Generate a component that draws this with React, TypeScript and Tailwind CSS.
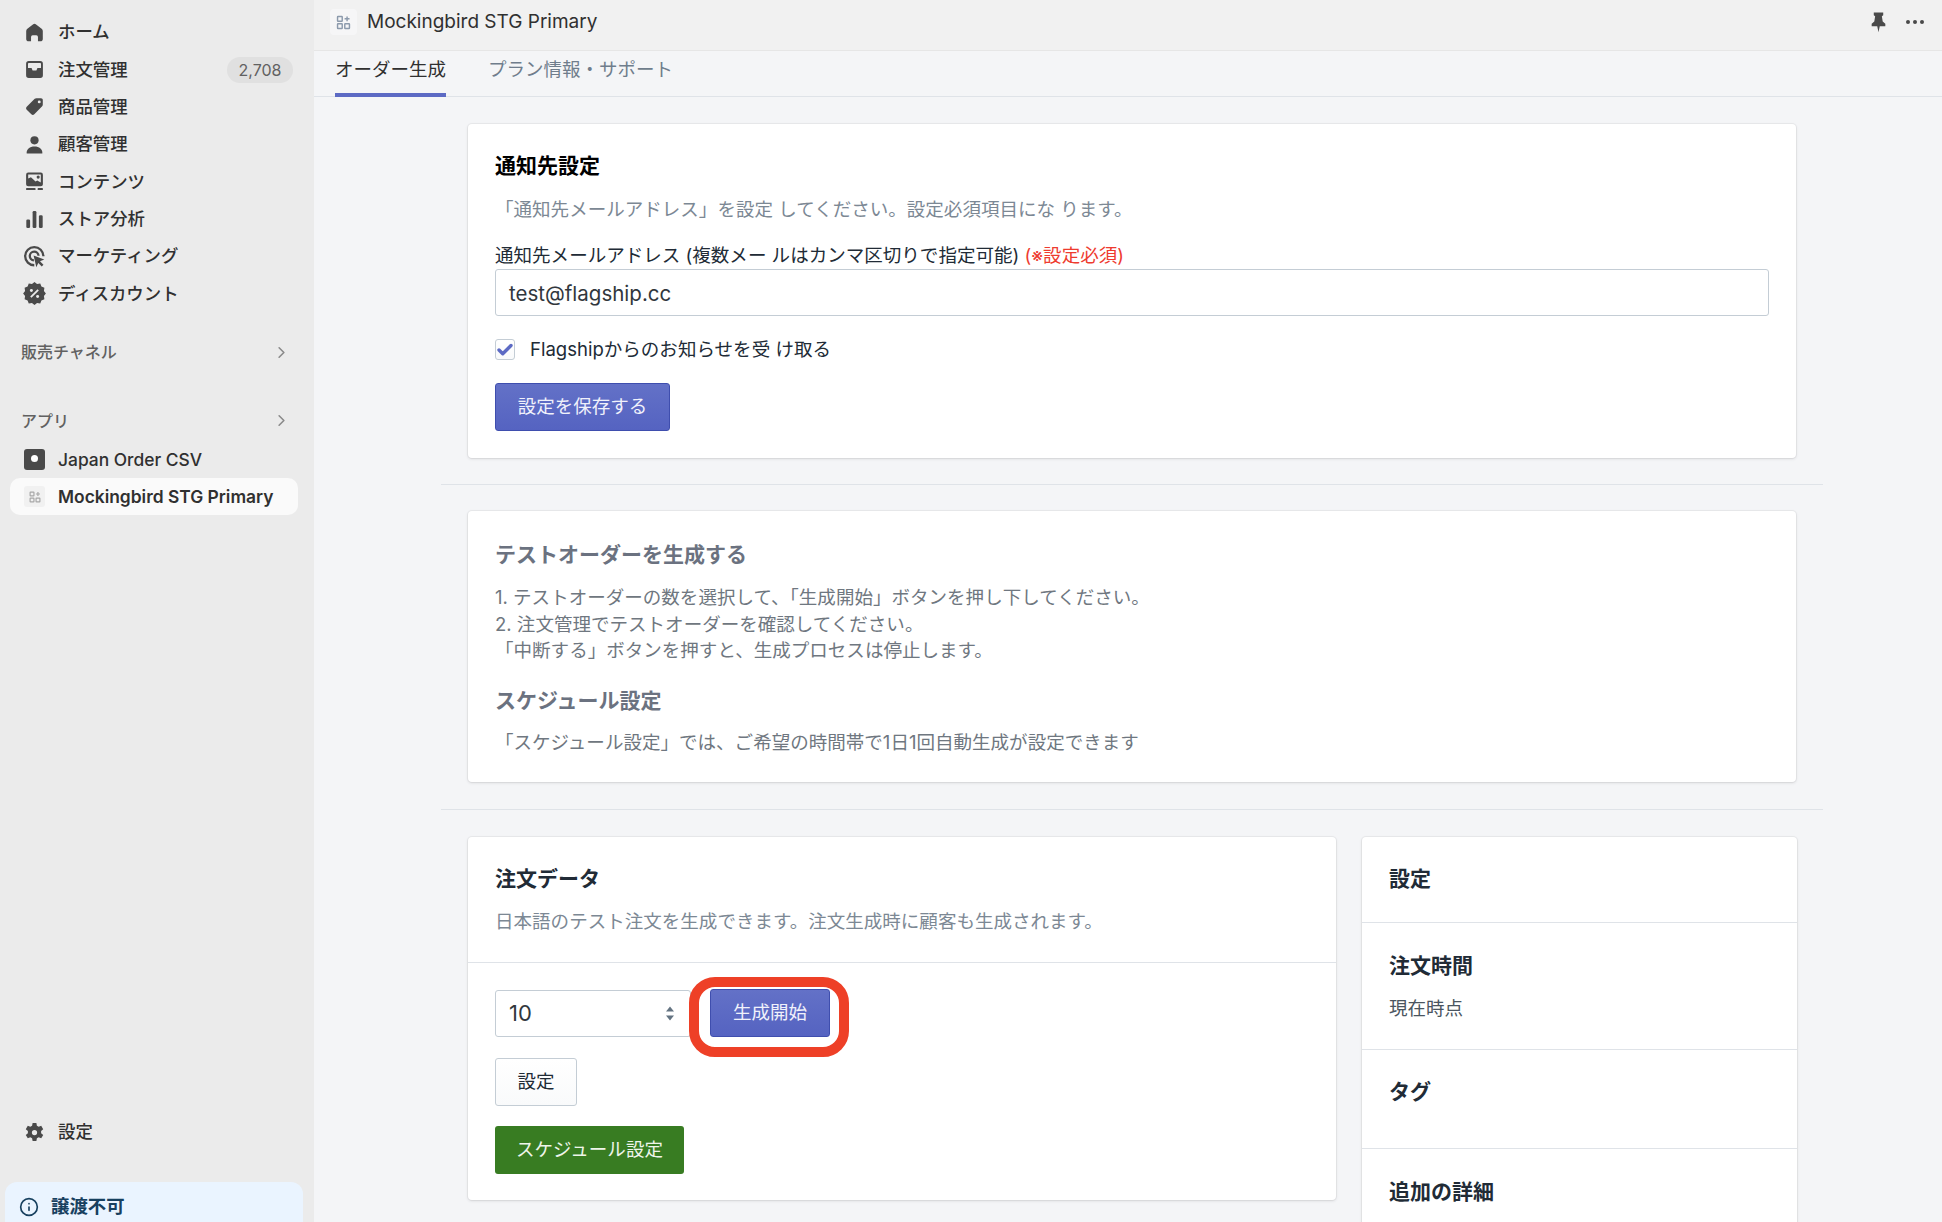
import React from 'react';
import { ChevronRight, Info, Check } from 'lucide-react';

const HomeIcon = () => (
  <svg viewBox="0 0 20 20" className="w-[21px] h-[21px]" fill="#4a4a4a">
    <path d="M8.800 2.100a2 2 0 0 1 2.400 0l5.600 4.400c.7.5 1.100 1.200 1.100 2.100v7.600c0 1.200-1 2.200-2.200 2.200h-2.400v-4.200a1.600 1.600 0 0 0-1.600-1.600H8.300a1.600 1.600 0 0 0-1.600 1.600v4.200H4.300c-1.200 0-2.200-1-2.200-2.200V8.600c0-.9.4-1.600 1.100-2.100z" />
  </svg>
);

const InboxIcon = () => (
  <svg viewBox="0 0 20 20" className="w-[21px] h-[21px]" fill="#4a4a4a">
    <path fillRule="evenodd" d="M4.500 2h11A2.500 2.500 0 0 1 18 4.500v11a2.500 2.500 0 0 1-2.500 2.500h-11A2.500 2.500 0 0 1 2 15.500v-11A2.500 2.500 0 0 1 4.500 2zM4.600 3.800a.8.8 0 0 0-.8.8V8.500h3.400l1 2.500h3.600l1-2.500h3.400V4.600a.8.8 0 0 0-.8-.8z" />
  </svg>
);

const TagIcon = () => (
  <svg viewBox="0 0 20 20" className="w-[21px] h-[21px]" fill="#4a4a4a">
    <path fillRule="evenodd" d="M11.800 2.200h4.400c1 0 1.700.8 1.700 1.700v4.400c0 .6-.2 1.100-.6 1.500l-7.500 7.600c-.8.800-2 .8-2.800 0l-4.400-4.400c-.8-.8-.8-2 0-2.800l7.600-7.500c.4-.3.900-.5 1.600-.5zM14.500 7a1.400 1.400 0 1 0 0-2.800 1.400 1.400 0 0 0 0 2.800z" />
  </svg>
);

const UserIcon = () => (
  <svg viewBox="0 0 20 20" className="w-[21px] h-[21px]" fill="#4a4a4a">
    <circle cx="10" cy="6" r="3.900" />
    <path d="M2.500 18c0-3.600 3-6 7.500-6s7.500 2.400 7.500 6c0 .3-.2.500-.5.500H3c-.3 0-.5-.2-.5-.5z" />
  </svg>
);

const ContentIcon = () => (
  <svg viewBox="0 0 20 20" className="w-[21px] h-[21px]" fill="#4a4a4a">
    <path fillRule="evenodd" d="M4 1.500h12A2 2 0 0 1 18 3.500v9a2 2 0 0 1-2 2H4a2 2 0 0 1-2-2v-9a2 2 0 0 1 2-2zM4 3.300v3.900l2.600-1.200 4.400 4 1.600-1 3.400 2V3.300zM13.500 7.300a1.500 1.500 0 1 0 0-3 1.500 1.500 0 0 0 0 3z" />
    <rect x="2" y="16.300" width="9" height="1.700" rx=".5" />
    <rect x="13" y="16.300" width="5" height="1.700" rx=".5" />
  </svg>
);

const ChartIcon = () => (
  <svg viewBox="0 0 20 20" className="w-[21px] h-[21px]" fill="#4a4a4a">
    <rect x="2.200" y="10" width="3.600" height="8" rx="1.200" />
    <rect x="8.200" y="2" width="3.600" height="16" rx="1.200" />
    <rect x="14.200" y="6" width="3.600" height="12" rx="1.200" />
  </svg>
);

const MarketingIcon = () => (
  <svg viewBox="0 0 20 20" className="w-[23px] h-[23px]" fill="none" stroke="#4a4a4a">
    <path strokeWidth="2" d="M9.800 17.600A7.900 7.900 0 1 1 17.700 9.700" />
    <path strokeWidth="2" d="M9.500 13.400A3.800 3.800 0 1 1 13.500 9.400" />
    <path fill="#4a4a4a" stroke="none" d="M9.200 9.200l9.300 3.300-3.700 1.700 3 3-1.500 1.500-3-3-1.700 3.600z" />
  </svg>
);

const DiscountIcon = () => (
  <svg viewBox="0 0 20 20" className="w-[23px] h-[23px]">
    <path fill="#4a4a4a" d="M10 .8l2.200 1.700 2.800-.4 1 2.600 2.600 1-.4 2.800 1.700 2.200-1.700 2.200.4 2.800-2.600 1-1 2.600-2.800-.4L10 20.600l-2.200-1.700-2.800.4-1-2.600-2.600-1 .4-2.800L.1 10.700l1.700-2.200-.4-2.800 2.600-1 1-2.600 2.800.4z" transform="translate(0 -.7)" />
    <circle cx="7.300" cy="7.300" r="1.300" fill="#ebebeb" />
    <circle cx="12.700" cy="12.700" r="1.300" fill="#ebebeb" />
    <path d="M13.200 6.800l-6.400 6.400" stroke="#ebebeb" strokeWidth="1.600" />
  </svg>
);

const GearIcon = () => (
  <svg viewBox="0 0 20 20" className="w-[21px] h-[21px]">
    <path fill="#4a4a4a" fillRule="evenodd" d="M8.200 1h3.600l.5 2.600 1.700.9 2.400-.9 1.900 3.200-2 1.700v2.100l2 1.700-1.900 3.200-2.400-.9-1.700.9-.5 2.600H8.200l-.5-2.600-1.700-.9-2.400.9-1.900-3.200 2-1.700V8.500l-2-1.700 1.900-3.200 2.400.9 1.700-.9zM10 12.500a2.500 2.500 0 1 0 0-5 2.500 2.500 0 0 0 0 5z" />
  </svg>
);

const PinIcon = () => (
  <svg viewBox="0 0 20 20" className="w-[21px] h-[22px]" fill="#4a4a4a">
    <path d="M5.500 1h9v2.500l-1.300 1 .8 5 2.500 2.200V14h-5.300L10 19.800 8.800 14H3.500v-2.300L6 9.500l.8-5-1.300-1z" />
  </svg>
);

const AppsIcon = ({ size, color }: { size: string; color: string }) => (
  <svg viewBox="0 0 20 20" className={size} fill="none" stroke={color} strokeWidth="1.700">
    <rect x="3" y="3" width="5.500" height="5.500" rx=".6" />
    <rect x="3" y="11.500" width="5.500" height="5.500" rx=".6" />
    <rect x="11.500" y="11.500" width="5.500" height="5.500" rx=".6" />
    <path d="M14.200 2.800v5.800M11.300 5.700h5.800" />
  </svg>
);

const navItems = [
  { label: 'ホーム', icon: <HomeIcon /> },
  { label: '注文管理', icon: <InboxIcon />, badge: '2,708' },
  { label: '商品管理', icon: <TagIcon /> },
  { label: '顧客管理', icon: <UserIcon /> },
  { label: 'コンテンツ', icon: <ContentIcon /> },
  { label: 'ストア分析', icon: <ChartIcon /> },
  { label: 'マーケティング', icon: <MarketingIcon /> },
  { label: 'ディスカウント', icon: <DiscountIcon /> },
];

const Sidebar = () => (
  <aside className="w-[314px] shrink-0 h-full bg-[#ebebeb] flex flex-col pt-[13.500px]">
    {navItems.map((item) => (
      <div key={item.label} className="h-[37.4px] flex items-center pl-[23px] pr-[21px] text-[17.400px] font-medium text-[#303030]">
        <span className="w-[23px] flex justify-center">{item.icon}</span>
        <span className="ml-[12px]">{item.label}</span>
        {item.badge && (
          <span className="ml-auto w-[66px] h-[26px] rounded-full bg-[#e0e0e0] text-[#616161] text-[16px] font-normal flex items-center justify-center">
            {item.badge}
          </span>
        )}
      </div>
    ))}

    <div className="mt-[21px] h-[37px] flex items-center justify-between pl-[21px] pr-[23px] text-[16px] font-medium text-[#616161]">
      <span>販売チャネル</span>
      <ChevronRight className="w-[19px] h-[19px] text-[#8a8a8a]" />
    </div>
    <div className="mt-[31.500px] h-[37px] flex items-center justify-between pl-[21px] pr-[23px] text-[16px] font-medium text-[#616161]">
      <span>アプリ</span>
      <ChevronRight className="w-[19px] h-[19px] text-[#8a8a8a]" />
    </div>
    <div className="mt-[2px] h-[37px] flex items-center pl-[24px] text-[17.400px] font-medium text-[#303030]">
      <span className="w-[21px] h-[21px] rounded-[3px] bg-[#4a4a4a] flex items-center justify-center">
        <span className="w-[7px] h-[7px] rounded-full bg-white mb-[3px]" />
      </span>
      <span className="ml-[13px]">Japan Order CSV</span>
    </div>
    <div className="mx-[10px] w-[288px] h-[37px] rounded-[10px] bg-[#fafafa] flex items-center pl-[14px] text-[17.400px] font-semibold text-[#303030]">
      <span className="w-[21px] h-[21px] rounded-[3px] bg-[#f1f1f1] flex items-center justify-center">
        <AppsIcon size="w-[14px] h-[14px]" color="#a8a8a8" />
      </span>
      <span className="ml-[13px]">Mockingbird STG Primary</span>
    </div>

    <div className="mt-auto h-[37px] flex items-center pl-[23px] text-[17.400px] font-medium text-[#303030]">
      <span className="w-[23px] flex justify-center"><GearIcon /></span>
      <span className="ml-[12px]">設定</span>
    </div>
    <div className="mt-[31px] mx-[5px] w-[298px] h-[40px] rounded-t-[12px] bg-[#eaf4ff] flex items-center pt-[9px] pl-[14px] text-[18.400px] font-semibold text-[#17405f]">
      <Info className="w-[20px] h-[20px]" strokeWidth={2} />
      <span className="ml-[12px]">譲渡不可</span>
    </div>
  </aside>
);

const Card = ({ className, children }: { className: string; children: React.ReactNode }) => (
  <div className={`bg-white rounded-[4px] shadow-[0_0_0_1px_rgba(63,63,68,0.05),0_1px_3px_0_rgba(63,63,68,0.15)] ${className}`}>
    {children}
  </div>
);

const Divider = () => <div className="my-[26px] h-px bg-[#dfe3e8]" />;

const btnPrimary = 'h-[48px] rounded-[3px] border border-[#3f4eae] bg-gradient-to-b from-[#6371c7] to-[#5563c1] text-[#f0f1fb] flex items-center justify-center';

export default function App() {
  return (
    <div className="w-[1942px] h-[1222px] overflow-hidden flex bg-[#f4f5f7] text-[18.550px] text-[#212b36] font-['Inter','Noto_Sans_CJK_JP',sans-serif]">
      <Sidebar />

      <main className="relative flex-1 min-w-0 h-full">
        {/* App title bar */}
        <div className="h-[51px] bg-[#f1f1f1] border-b border-[#e6e6e6] flex items-center pb-[6px] pl-[16px] pr-[18px]">
          <span className="w-[27px] h-[26px] rounded-[4px] bg-[#f6f6f7] flex items-center justify-center">
            <AppsIcon size="w-[17px] h-[17px]" color="#8c9aac" />
          </span>
          <span className="ml-[10px] text-[19px] text-[#303030]">Mockingbird STG Primary</span>
          <span className="ml-auto"><PinIcon /></span>
          <span className="ml-[17px] flex gap-[3px]">
            <i className="w-[4px] h-[4px] rounded-full bg-[#4a4a4a]" />
            <i className="w-[4px] h-[4px] rounded-full bg-[#4a4a4a]" />
            <i className="w-[4px] h-[4px] rounded-full bg-[#4a4a4a]" />
          </span>
        </div>

        {/* Tabs */}
        <div className="h-[46px] border-b border-[#dfe3e8] flex pl-[21px] text-[18.500px]">
          <div className="w-[111px] h-[46px] border-b-[4px] border-[#5c6ac4] text-center leading-[36px] text-[#303030]">オーダー生成</div>
          <div className="ml-[42px] leading-[36px] text-[#6f7d8c]">プラン情報・サポート</div>
        </div>

        <div className="ml-[127px] w-[1382px] pt-[27px]">
          <div className="px-[27px]">
            <Card className="h-[334px] pt-[28px] px-[27px]">
              <h2 className="text-[21px] font-bold leading-[28px] text-black">通知先設定</h2>
              <p className="mt-[16px] leading-[26px] text-[#7c8894]">「通知先メールアドレス」を設定 してください。設定必須項目にな ります。</p>
              <p className="mt-[20px] leading-[26px]">
                通知先メールアドレス (複数メー ルはカンマ区切りで指定可能) <span className="text-[#ee3b2f]">(※設定必須)</span>
              </p>
              <div className="mt-px h-[47px] w-[1274px] border border-[#c4cdd5] rounded-[3px] flex items-center pt-[3px] pl-[13px] text-[20.500px] text-[#31373d]">
                test@flagship.cc
              </div>
              <div className="mt-[23px] flex items-center h-[21px]">
                <span className="w-[20px] h-[21px] rounded-[3px] border border-[#c4cdd5] bg-gradient-to-b from-white to-[#f9fafb] flex items-center justify-center">
                  <Check className="w-[18px] h-[18px] text-[#5c6ac4]" strokeWidth={4.500} />
                </span>
                <span className="ml-[15px]">Flagshipからのお知らせを受 け取る</span>
              </div>
              <button className={`mt-[23px] w-[175px] ${btnPrimary}`}>設定を保存する</button>
            </Card>
          </div>

          <Divider />

          <div className="px-[27px]">
            <Card className="h-[271px] pt-[30px] px-[27px] text-[#6f7780]">
              <h2 className="text-[21px] font-bold leading-[28px] text-[#6b7280]">テストオーダーを生成する</h2>
              <div className="mt-[15px] leading-[26.500px]">
                <p>1. テストオーダーの数を選択して、「生成開始」ボタンを押し下してください。</p>
                <p>2. 注文管理でテストオーダーを確認してください。</p>
                <p>「中断する」ボタンを押すと、生成プロセスは停止します。</p>
              </div>
              <h2 className="mt-[23px] text-[21px] font-bold leading-[28px] text-[#6b7280]">スケジュール設定</h2>
              <p className="mt-[14px] leading-[26px]">「スケジュール設定」では、ご希望の時間帯で1日1回自動生成が設定できます</p>
            </Card>
          </div>

          <div className="mt-[27px] mb-[27px] h-px bg-[#dfe3e8]" />

          <div className="pl-[27px] pr-[26px] flex items-start gap-[26px]">
            <Card className="flex-1 h-[363px]">
              <div className="h-[126px] pt-[28px] px-[27px] border-b border-[#dfe3e8]">
                <h2 className="text-[21px] font-bold leading-[28px]">注文データ</h2>
                <p className="mt-[15px] leading-[26px] text-[#7c8894]">日本語のテスト注文を生成できます。注文生成時に顧客も生成されます。</p>
              </div>
              <div className="pt-[26px] px-[27px]">
                <div className="flex items-center gap-[19px]">
                  <div className="w-[196px] h-[47px] border border-[#c4cdd5] rounded-[3px] flex items-center justify-between pl-[13px] pr-[15px] text-[22px] text-[#31373d]">
                    <span>10</span>
                    <svg viewBox="0 0 10 16" className="w-[10px] h-[17px]" fill="#637381">
                      <path d="M5 1l4 5H1zM5 15l-4-5h8z" />
                    </svg>
                  </div>
                  <button className={`w-[120px] ${btnPrimary}`}>生成開始</button>
                </div>
                <button className="mt-[21px] w-[82px] h-[48px] rounded-[3px] border border-[#c4cdd5] bg-gradient-to-b from-white to-[#f9fafb] flex items-center justify-center text-[#212b36]">設定</button>
                <button className="mt-[20px] w-[189px] h-[48px] rounded-[3px] bg-[#387c22] text-[#eef5ea] flex items-center justify-center">スケジュール設定</button>
              </div>
            </Card>

            <Card className="w-[435px] h-[500px]">
              <div className="h-[86px] pt-[28px] px-[27px] border-b border-[#dfe3e8]">
                <h3 className="text-[21px] font-bold leading-[28px]">設定</h3>
              </div>
              <div className="h-[127px] pt-[29px] px-[27px] border-b border-[#dfe3e8]">
                <h3 className="text-[21px] font-bold leading-[28px]">注文時間</h3>
                <p className="mt-[15px] leading-[26px] text-[#4a5560]">現在時点</p>
              </div>
              <div className="h-[99px] pt-[28px] px-[27px] border-b border-[#dfe3e8]">
                <h3 className="text-[21px] font-bold leading-[28px]">タグ</h3>
              </div>
              <div className="pt-[29px] px-[27px]">
                <h3 className="text-[21px] font-bold leading-[28px]">追加の詳細</h3>
              </div>
            </Card>
          </div>
        </div>

        {/* Red annotation ring around the start button */}
        <div className="absolute left-[375px] top-[977px] w-[160px] h-[80px] rounded-[26px] border-[10px] border-[#ee4027]" />
      </main>
    </div>
  );
}
